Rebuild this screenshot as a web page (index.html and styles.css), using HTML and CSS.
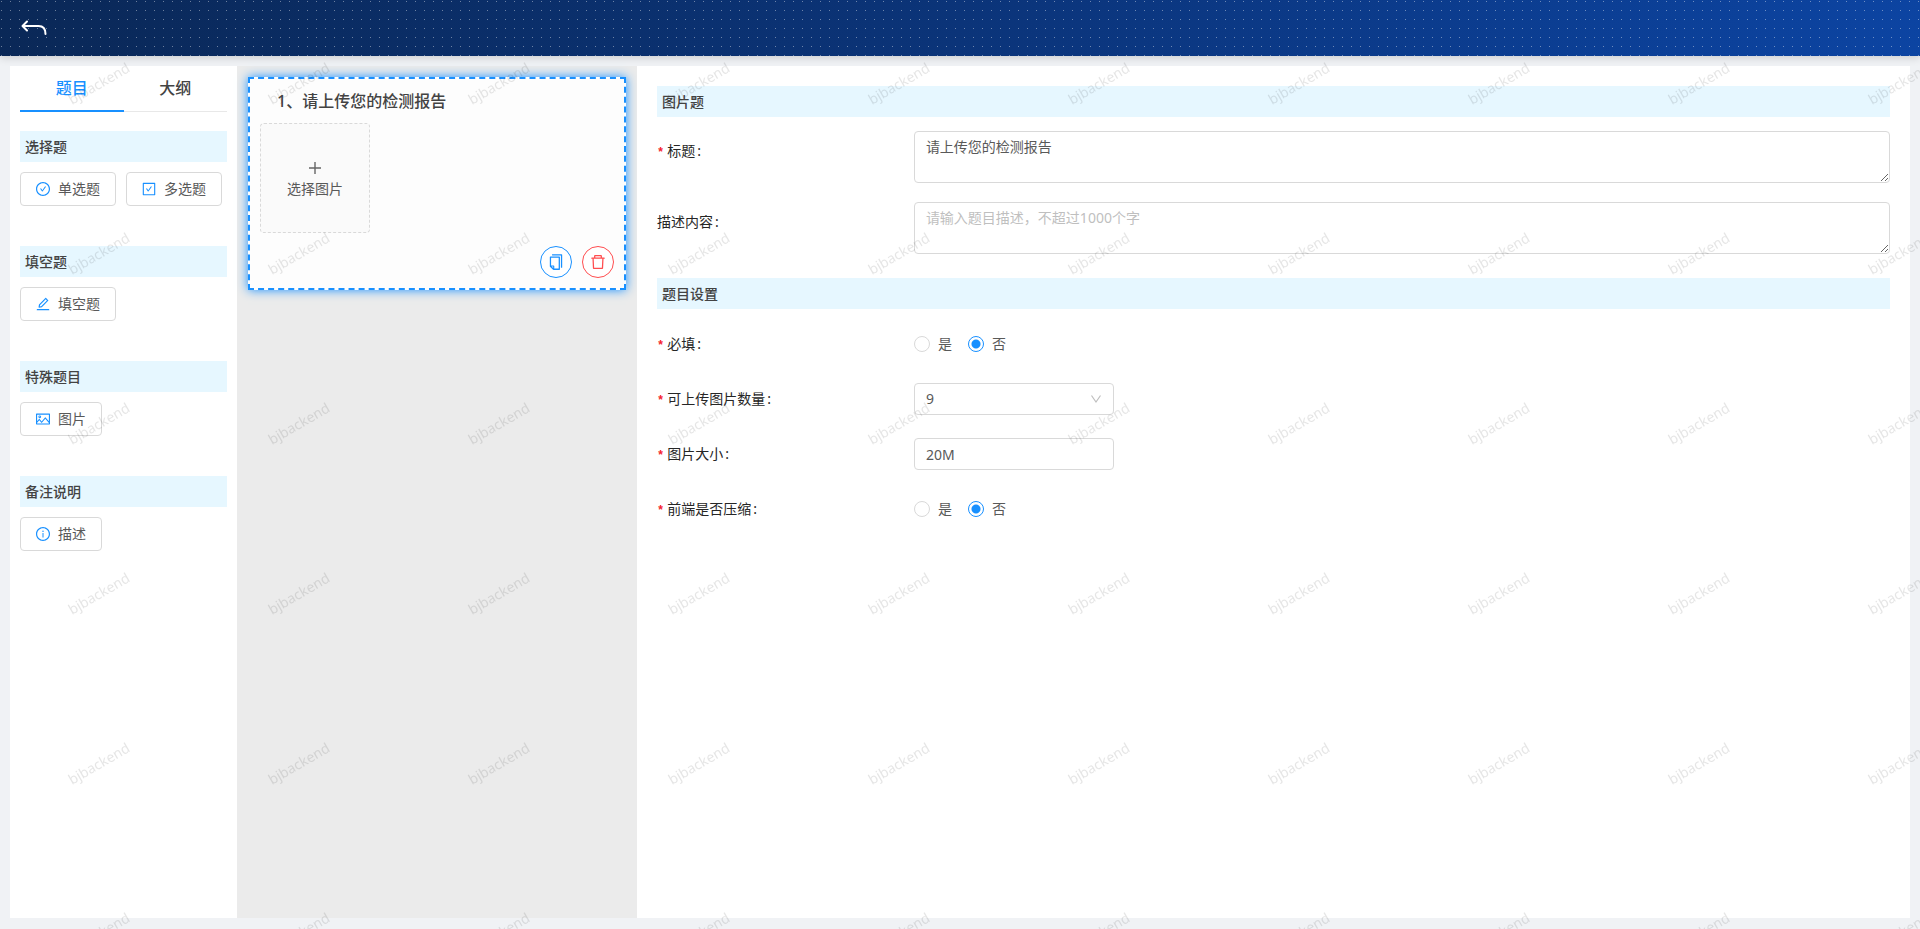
FILE: index.html
```html
<!DOCTYPE html>
<html lang="zh-CN">
<head>
<meta charset="utf-8">
<title>题目编辑</title>
<link rel="stylesheet" href="styles.css">
</head>
<body>
<svg class="defs" aria-hidden="true">
  <symbol id="i-circle" viewBox="0 0 1024 1024"><path d="M512 64C264.6 64 64 264.6 64 512s200.6 448 448 448 448-200.6 448-448S759.4 64 512 64zm0 820c-205.4 0-372-166.6-372-372s166.6-372 372-372 372 166.6 372 372-166.6 372-372 372z"/></symbol>
</svg>

<header class="topbar">
  <button class="back" type="button" aria-label="返回">
    <svg width="26" height="16" viewBox="0 0 26 16"><path d="M6 1.5 1.5 6 6 10.500M2 6h15.500c4.500 0 7 3 7 8" fill="none" stroke="#fff" stroke-width="2" stroke-linecap="round" stroke-linejoin="round"/></svg>
  </button>
</header>

<main class="workspace">
  <aside class="palette">
    <div class="tabs" role="tablist">
      <button class="tab tab-active" type="button" role="tab" aria-selected="true">题目</button>
      <button class="tab" type="button" role="tab" aria-selected="false">大纲</button>
    </div>
    <section class="group">
      <h2 class="bar">选择题</h2>
      <div class="choices">
        <button class="choice" type="button"><svg class="icon" viewBox="0 0 1024 1024"><use href="#i-circle"/><path d="M699 353h-46.900c-10.200 0-19.900 4.900-25.900 13.300L469 584.300l-71.200-98.800c-6-8.300-15.600-13.300-25.900-13.300H325c-6.500 0-10.300 7.400-6.500 12.700l124.600 172.800a31.800 31.800 0 0 0 51.700 0l210.600-292c3.900-5.300.1-12.700-6.400-12.700z"/></svg>单选题</button>
        <button class="choice" type="button"><svg class="icon" viewBox="0 0 1024 1024"><path d="M433.100 657.700a31.800 31.800 0 0 0 51.700 0l210.600-292c3.800-5.300 0-12.700-6.500-12.700H642c-10.200 0-19.900 4.900-25.900 13.300L459 584.300l-71.200-98.800c-6-8.300-15.600-13.300-25.900-13.300H315c-6.500 0-10.300 7.400-6.500 12.700l124.600 172.800z"/><path d="M880 112H144c-17.700 0-32 14.300-32 32v736c0 17.700 14.300 32 32 32h736c17.700 0 32-14.300 32-32V144c0-17.700-14.300-32-32-32zm-40 728H184V184h656v656z"/></svg>多选题</button>
      </div>
    </section>
    <section class="group">
      <h2 class="bar">填空题</h2>
      <div class="choices">
        <button class="choice" type="button"><svg class="icon" viewBox="0 0 1024 1024"><path d="M257.700 752c2 0 4-.2 6-.5L431.900 722c2-.4 3.900-1.300 5.300-2.800l423.900-423.900a9.960 9.960 0 0 0 0-14.100L694.900 114.900c-1.900-1.900-4.400-2.900-7.100-2.900s-5.200 1-7.100 2.900L256.800 538.800c-1.500 1.500-2.400 3.300-2.800 5.300l-29.500 168.200a33.500 33.500 0 0 0 9.400 29.800c6.600 6.400 14.900 9.900 23.800 9.900zm67.400-174.400L687.800 215l73.300 73.300-362.700 362.600-88.900 15.700 15.600-89zM880 836H144c-17.700 0-32 14.300-32 32v36c0 4.400 3.600 8 8 8h784c4.400 0 8-3.600 8-8v-36c0-17.700-14.300-32-32-32z"/></svg>填空题</button>
      </div>
    </section>
    <section class="group">
      <h2 class="bar">特殊题目</h2>
      <div class="choices">
        <button class="choice" type="button"><svg class="icon" viewBox="0 0 1024 1024"><path d="M928 160H96c-17.700 0-32 14.300-32 32v640c0 17.700 14.300 32 32 32h832c17.700 0 32-14.300 32-32V192c0-17.700-14.300-32-32-32zm-40 632H136v-39.900l138.500-164.300 150.100 178L658.100 489 888 761.600V792zm0-129.800L664.200 396.800c-3.200-3.800-9-3.800-12.200 0L424.600 666.400l-144-170.700c-3.200-3.800-9-3.800-12.200 0L136 652.700V232h752v430.200zM304 456a88 88 0 1 0 0-176 88 88 0 0 0 0 176zm0-116c15.500 0 28 12.500 28 28s-12.500 28-28 28-28-12.500-28-28 12.500-28 28-28z"/></svg>图片</button>
      </div>
    </section>
    <section class="group">
      <h2 class="bar">备注说明</h2>
      <div class="choices">
        <button class="choice" type="button"><svg class="icon" viewBox="0 0 1024 1024"><use href="#i-circle"/><path d="M464 336a48 48 0 1 0 96 0 48 48 0 1 0-96 0zm72 112h-48c-4.400 0-8 3.600-8 8v272c0 4.400 3.600 8 8 8h48c4.400 0 8-3.600 8-8V456c0-4.400-3.600-8-8-8z"/></svg>描述</button>
      </div>
    </section>
  </aside>

  <section class="canvas">
    <article class="question">
      <h3 class="question-title">1、请上传您的检测报告</h3>
      <button class="upload" type="button">
        <svg width="12" height="12" viewBox="0 0 12 12"><path d="M6 0v12M0 6h12" fill="none" stroke="#666" stroke-width="1.400"/></svg>
        <span>选择图片</span>
      </button>
      <div class="actions">
        <button class="round round-copy" type="button" aria-label="复制"><svg class="icon" viewBox="0 0 1024 1024"><path d="M832 64H296c-4.400 0-8 3.600-8 8v56c0 4.400 3.600 8 8 8h496v688c0 4.400 3.600 8 8 8h56c4.400 0 8-3.600 8-8V96c0-17.700-14.300-32-32-32zM704 192H192c-17.700 0-32 14.300-32 32v530.700c0 8.500 3.400 16.600 9.400 22.600l173.300 173.300c2.200 2.200 4.700 4 7.400 5.500v1.900h4.200c3.500 1.300 7.200 2 11 2H704c17.700 0 32-14.300 32-32V224c0-17.700-14.300-32-32-32zM350 856.200L263.900 770H350v86.200zM664 888H414V746c0-22.100-17.900-40-40-40H232V264h432v624z"/></svg></button>
        <button class="round round-delete" type="button" aria-label="删除"><svg class="icon" viewBox="0 0 1024 1024"><path d="M360 184h304v72h72v-80c0-35.300-28.700-64-64-64H352c-35.300 0-64 28.700-64 64v80h72v-72zm504 72H160c-17.700 0-32 14.300-32 32v32c0 4.400 3.600 8 8 8h60.400l24.700 523c1.600 34.100 29.800 61 63.900 61h454c34.200 0 62.300-26.800 63.900-61l24.700-523H888c4.400 0 8-3.600 8-8v-32c0-17.700-14.300-32-32-32zM731.300 840H292.700l-24.200-512h487l-24.200 512z"/></svg></button>
      </div>
    </article>
  </section>

  <form class="settings">
    <h2 class="bar">图片题</h2>
    <div class="fields fields-text">
      <div class="field">
        <label class="label required" for="title">标题</label>
        <textarea class="box area" id="title">请上传您的检测报告</textarea>
      </div>
      <div class="field">
        <label class="label" for="desc">描述内容</label>
        <textarea class="box area" id="desc" placeholder="请输入题目描述，不超过1000个字"></textarea>
      </div>
    </div>
    <h2 class="bar">题目设置</h2>
    <div class="fields fields-options">
      <div class="field" role="radiogroup" aria-labelledby="l-must">
        <span class="label required" id="l-must">必填</span>
        <div class="radios">
          <label class="radio"><input type="radio" name="must">是</label>
          <label class="radio"><input type="radio" name="must" checked>否</label>
        </div>
      </div>
      <div class="field">
        <label class="label required" for="count">可上传图片数量</label>
        <div class="select">
          <select class="box" id="count"><option>9</option></select>
          <svg class="chevron" width="12" height="12" viewBox="0 0 12 12"><path d="M1.500 2.500 6 9l4.500-6.500" fill="none" stroke="#bfbfbf" stroke-width="1.200"/></svg>
        </div>
      </div>
      <div class="field">
        <label class="label required" for="size">图片大小</label>
        <input class="box short" id="size" type="text" value="20M">
      </div>
      <div class="field" role="radiogroup" aria-labelledby="l-zip">
        <span class="label required" id="l-zip">前端是否压缩</span>
        <div class="radios">
          <label class="radio"><input type="radio" name="zip">是</label>
          <label class="radio"><input type="radio" name="zip" checked>否</label>
        </div>
      </div>
    </div>
  </form>
</main>

<svg class="watermark" aria-hidden="true">
  <defs>
    <pattern id="mark" width="200" height="170" patternUnits="userSpaceOnUse">
      <text class="mark-text" transform="translate(72 105) rotate(-30)">bjbackend</text>
    </pattern>
  </defs>
  <rect width="100%" height="100%" fill="url(#mark)"/>
</svg>
</body>
</html>
```

FILE: styles.css
```css
* {
  box-sizing: border-box;
}

body {
  margin: 0;
  min-height: 100vh;
  display: flex;
  flex-direction: column;
  background: #f0f2f5;
  color: #595959;
  font: 14px/22px "Noto Sans", "Noto Sans CJK SC", sans-serif;
}

button,
input,
select,
textarea {
  font: inherit;
  color: inherit;
}

button {
  cursor: pointer;
}

.defs {
  position: absolute;
  width: 0;
  height: 0;
}

.icon {
  width: 16px;
  height: 16px;
  fill: currentColor;
}

/* Header */
.topbar {
  height: 56px;
  padding: 0 21px;
  display: flex;
  align-items: center;
  background:
    conic-gradient(from 270deg at 1px 1px, rgba(255, 255, 255, 0.4) 90deg, transparent 0) 1px 1px / 9px 9px,
    linear-gradient(100deg, #0a2857, #0b3479 50%, #0c44a2);
  box-shadow: 0 2px 8px rgba(0, 0, 0, 0.15);
}

.back {
  display: flex;
  padding: 0;
  border: 0;
  background: none;
}

/* Three columns */
.workspace {
  flex: 1;
  display: grid;
  grid-template-columns: 227px 400px 1fr;
  padding: 10px 10px 11px;
}

.palette {
  padding: 0 10px;
  background: #fff;
}

.tabs {
  display: flex;
  box-shadow: inset 0 -1px #e8e8e8;
}

.tab {
  flex: 1;
  padding: 11px 0;
  border: 0;
  border-bottom: 2px solid transparent;
  background: none;
  color: #434343;
  font-size: 16px;
  font-weight: 500;
}

.tab-active {
  color: #1890ff;
  border-color: #1890ff;
}

.bar {
  margin: 0;
  padding: 5px 5px 4px;
  background: #e6f7ff;
  color: #434343;
  font-size: 14px;
  line-height: 22px;
  font-weight: 500;
}

.group {
  margin: 19px 0 40px;
}

.group + .group {
  margin-top: 0;
}

.choices {
  display: flex;
  gap: 10px;
  margin-top: 10px;
}

.choice {
  display: flex;
  align-items: center;
  gap: 7px;
  height: 34px;
  padding: 0 15px 0 14px;
  border: 1px solid #d9d9d9;
  border-radius: 4px;
  background: #fff;
}

.choice .icon {
  color: #1890ff;
}

/* Question preview */
.canvas {
  padding: 11px;
  background: #ebebeb;
}

.question {
  padding: 10px;
  border: 2px dashed #1890ff;
  background: #fdfdfd;
  box-shadow: 0 0 10px #1890ff;
}

.question-title {
  margin: 0 17px 10px;
  color: #434343;
  font-size: 16px;
  line-height: 24px;
  font-weight: 500;
}

.upload {
  width: 110px;
  height: 110px;
  display: flex;
  flex-direction: column;
  align-items: center;
  justify-content: center;
  gap: 4px;
  padding: 6px 0 0;
  border: 1px dashed #d9d9d9;
  border-radius: 4px;
  background: #fafafa;
}

.actions {
  display: flex;
  justify-content: flex-end;
  gap: 10px;
  margin-top: 13px;
}

.round {
  width: 32px;
  height: 32px;
  display: flex;
  align-items: center;
  justify-content: center;
  padding: 0;
  border: 1px solid currentColor;
  border-radius: 50%;
  background: #fff;
}

.round .icon {
  width: 18px;
  height: 18px;
}

.round-copy {
  color: #1890ff;
}

.round-delete {
  color: #ff4d4f;
}

/* Settings form */
.settings {
  padding: 20px;
  background: #fff;
}

.fields {
  display: grid;
}

.fields-text {
  gap: 19px;
  padding: 14px 0 24px;
}

.fields-options {
  gap: 15px;
  padding-top: 15px;
}

.field {
  display: grid;
  grid-template-columns: 5fr 19fr;
  align-items: start;
}

.fields-options .field {
  align-items: center;
}

.label {
  height: 40px;
  line-height: 40px;
  color: #262626;
}

.label::after {
  content: ":";
  margin-left: 2px;
}

.required::before {
  content: "*";
  margin-right: 3px;
  color: #f5222d;
  font-family: "Liberation Mono", monospace;
  font-size: 12px;
  font-weight: 700;
  line-height: 1;
}

.box {
  width: 100%;
  height: 32px;
  padding: 4px 11px;
  border: 1px solid #d9d9d9;
  border-radius: 4px;
  background: #fff;
  outline: 0;
}

.area {
  display: block;
  height: 52px;
  resize: vertical;
}

.area::placeholder {
  color: #bfbfbf;
}

.short,
.select {
  width: 200px;
}

.select {
  position: relative;
}

.select .box {
  display: block;
  appearance: none;
}

.chevron {
  position: absolute;
  top: 10px;
  right: 12px;
  pointer-events: none;
}

.radios {
  display: flex;
  gap: 16px;
}

.radio {
  display: flex;
  align-items: center;
  gap: 8px;
}

.radio input {
  appearance: none;
  width: 16px;
  height: 16px;
  margin: 0;
  border: 1px solid #d9d9d9;
  border-radius: 50%;
  background: #fff;
}

.radio input:checked {
  border-color: #1890ff;
  background: radial-gradient(circle, #1890ff 4px, #fff 5px);
}

/* Repeated user mark over the page */
.watermark {
  position: fixed;
  inset: 0;
  width: 100%;
  height: 100%;
  pointer-events: none;
}

.mark-text {
  font: 14px "Noto Sans", sans-serif;
  fill: rgba(0, 0, 0, 0.1);
}
```
